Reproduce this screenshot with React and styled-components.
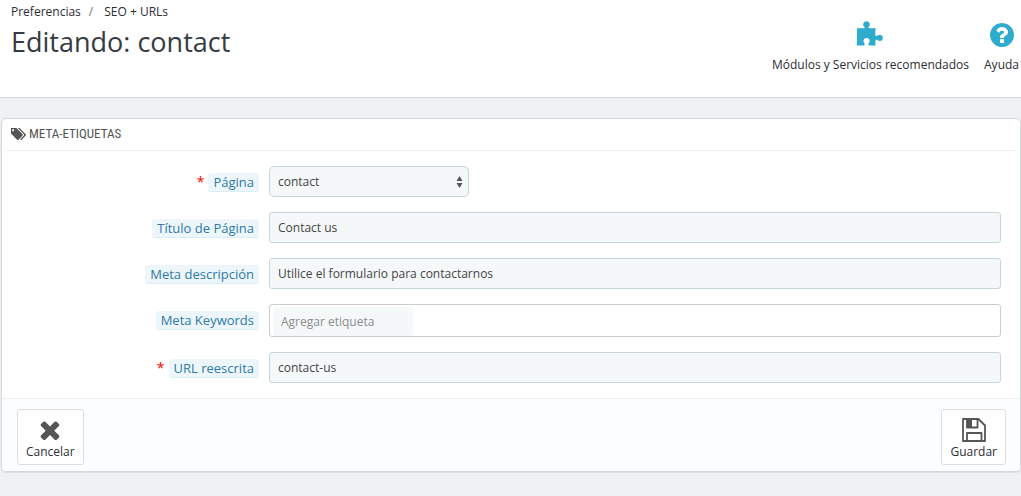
import styled, { createGlobalStyle } from "styled-components"

const GlobalStyle = createGlobalStyle`
    * {
        box-sizing: border-box;
    }
    body {
        margin: 0;
        min-height: 100vh;
        background-color: #eff1f2;
        color: #363a41;
        font-family: "Open Sans", "Noto Sans", sans-serif;
        font-size: 12px;
        line-height: 18px;
    }
    button, input, select {
        font-family: inherit;
        font-size: inherit;
        line-height: inherit;
    }
`
const Header = styled.header`
    display: flex;
    justify-content: space-between;
    height: 98px;
    padding: 3px 2px 0 11px;
    background-color: white;
    border-bottom: solid 1px #d6dade;
`
const Breadcrumb = styled.nav`
    display: flex;
`
const Crumb = styled.a`
    color: #2b2e33;
    text-decoration: none;
`
const Slash = styled.span`
    padding: 0 11px 0 8px;
    color: #5f7d5c;
`
const Title = styled.h1`
    margin: 0;
    font-size: 27px;
    font-weight: 400;
    line-height: 42px;
`
const Toolbar = styled.div`
    display: flex;
    gap: 15px;
    padding-top: 17px;
`
const Tool = styled.a`
    display: flex;
    flex-direction: column;
    align-items: center;
    gap: 6px;
    color: #2b2e33;
    text-decoration: none;
`
const Panel = styled.form`
    margin: 20px 0 0 1px;
    background-color: white;
    border: solid 1px #d3d8db;
    border-radius: 5px;
    box-shadow: 0 1px 1px rgba(0, 0, 0, 0.08);
    overflow: hidden;
`
const PanelHeading = styled.h2`
    display: flex;
    align-items: center;
    gap: 3px;
    height: 32px;
    margin: 0 4px;
    padding: 0 5px 1px;
    border-bottom: solid 1px #eeeeee;
    color: #555555;
    font-family: "Ubuntu Condensed", "Roboto Condensed", "Open Sans Condensed", Roboto, sans-serif;
    font-size: 13px;
    font-weight: 400;
    text-transform: uppercase;
`
const Fields = styled.div`
    display: flex;
    flex-direction: column;
    gap: 15px;
    padding: 15px 19px 15px 13px;
`
const Row = styled.div`
    display: grid;
    grid-template-columns: 1fr 3fr;
    column-gap: 10px;
    align-items: start;
`
const LabelCell = styled.label`
    display: flex;
    justify-content: flex-end;
    gap: 4px;
    padding-top: 7px;
    font-size: 13px;
`
const Required = styled.span`
    color: #ff0000;
    font-size: 14px;
`
const Hint = styled.span`
    padding: 0 5px;
    background-color: #edf7fb;
    border-bottom: solid 1px #d8edf7;
    border-radius: 3px;
    color: #3079a6;
`
const TextInput = styled.input`
    width: 100%;
    height: 31px;
    padding: 0 8px;
    background-color: #f5f8f9;
    border: solid 1px #c7d6db;
    border-radius: 3px;
    color: #444444;
`
const SelectBox = styled.div`
    display: grid;
    grid-template-columns: 1fr 18px;
    align-items: center;
    width: 200px;
    height: 31px;
    background-color: #f5f8f9;
    border: solid 1px #c7d6db;
    border-radius: 5px;
    color: #555555;

    svg {
        grid-area: 1 / 2;
        justify-self: center;
        pointer-events: none;
    }
`
const Select = styled.select`
    grid-area: 1 / 1 / 2 / 3;
    width: 100%;
    height: 100%;
    padding: 0 8px;
    appearance: none;
    background: none;
    border: none;
    color: #444444;
`
const TagBox = styled.div`
    height: 33px;
    padding: 2px 3px 0;
    border: solid 1px #cccccc;
    border-radius: 3px;
`
const TagInput = styled.input`
    display: block;
    width: 140px;
    height: 29px;
    padding: 0 8px;
    background-color: #f5f8f9;
    border: none;
    border-radius: 3px;

    &::placeholder {
        color: #8c8c8c;
        opacity: 1;
    }
`
const PanelFooter = styled.div`
    display: flex;
    justify-content: space-between;
    padding: 10px 14px 6px 15px;
    background-color: #fcfdfe;
    border-top: solid 1px #eeeeee;
`
const Button = styled.button`
    display: flex;
    flex-direction: column;
    align-items: center;
    gap: 1px;
    padding: 8px 8px 3px;
    background-color: white;
    border: solid 1px #dddddd;
    border-radius: 3px;
    color: #2b2e33;
    cursor: pointer;

    svg {
        color: #555555;
    }
`

function PuzzleIcon() {
  return (
    <svg width="28" height="30" viewBox="-1 0 28 30" fill="#2eacce">
      <path d="M0 8.300H7q.8-.2.600-1.100C7.400 6.200 6.200 6 6.200 4.400 6.200 2.600 7.700 1.300 9.500 1.300s3.300 1.300 3.300 3.100c0 1.600-1.100 2-1.300 2.800q-.2.900.8 1.100c2 .2 4-.2 6.300-.4-.3 2-.5 5-.2 7.100q.2 1.200 1.300 1c1-.3 1.600-1.200 3.200-1.200 1.700 0 2.900 1.300 2.900 3.100s-1.200 3.100-2.900 3.100c-1.600 0-2.200-1-3.200-1.200q-1.100-.2-1.300 1c-.2 1.400 0 3 .2 4.600-2 0-4 .3-6.300 0-1.200-.3-.9-.7-.8-1.300.1-1 1.200-1.700 1.200-3.200 0-1.800-1.300-3-3.100-3s-3.100 1.200-3.100 3c0 1.500 1.100 2.200 1.200 3.200.1.600.3 1-.8 1.300-2 .2-4 .1-7 .2z" />
    </svg>
  )
}

function HelpIcon() {
  return (
    <svg width="28" height="30" viewBox="0 -64 1792 1920" fill="#2eacce">
      <path d="M1024 1376v-192q0-14-9-23t-23-9h-192q-14 0-23 9t-9 23v192q0 14 9 23t23 9h192q14 0 23-9t9-23zm256-672q0-88-55.500-163t-138.500-116-170-41q-243 0-371 213-15 24 8 42l132 100q7 6 19 6 16 0 25-12 53-68 86-92 34-24 86-24 48 0 85.500 26t37.500 59q0 38-20 61t-68 45q-63 28-115.500 86.500t-52.500 125.500v36q0 14 9 23t23 9h192q14 0 23-9t9-23q0-19 21.500-49.500t54.500-49.500q32-18 49-28.500t46-35 44.500-48 28-60.500 12.500-81zm384 192q0 209-103 385.500t-279.500 279.500-385.500 103-385.500-103-279.500-279.500-103-385.500 103-385.500 279.500-279.500 385.500-103 385.500 103 279.500 279.500 103 385.500z" />
    </svg>
  )
}

function TagsIcon() {
  return (
    <svg width="15" height="12" viewBox="192 192 1835 1451" fill="currentColor">
      <path d="M576 448q0-53-37.500-90.500t-90.500-37.500-90.500 37.500-37.500 90.500 37.500 90.500 90.500 37.500 90.500-37.500 37.500-90.500zm1067 576q0 53-37 90l-491 492q-39 37-91 37-53 0-90-37l-715-716q-38-37-64.500-101t-26.500-117v-416q0-52 38-90t90-38h416q53 0 117 26.500t102 64.500l715 714q37 39 37 91zm384 0q0 53-37 90l-491 492q-39 37-91 37-36 0-59-14t-53-45l470-470q37-37 37-90 0-52-37-91l-715-714q-38-38-102-64.500t-117-26.500h224q53 0 117 26.500t102 64.500l715 714q37 39 37 91z" />
    </svg>
  )
}

function CancelIcon() {
  return (
    <svg width="24" height="24" viewBox="134 150 1525 1525" fill="currentColor">
      <path d="M1490 1322q0 40-28 68l-136 136q-28 28-68 28t-68-28l-294-294-294 294q-28 28-68 28t-68-28l-136-136q-28-28-28-68t28-68l294-294-294-294q-28-28-28-68t28-68l136-136q28-28 68-28t68 28l294 294 294-294q28-28 68-28t68 28l136 136q28 28 28 68t-28 68l-294 294 294 294q28 28 28 68z" />
    </svg>
  )
}

function SaveIcon() {
  return (
    <svg width="24" height="24" viewBox="0 0 24 24" fill="none" stroke="currentColor" strokeWidth="1.800">
      <path d="M1 1h15.500L23 7.500V23H1z" strokeLinejoin="round" />
      <path d="M5 1v8.500h10.500V1M5 23v-8h14.500v8" strokeLinejoin="round" />
      <path d="M4.500 1H10v9H4.500z" fill="currentColor" stroke="none" />
    </svg>
  )
}

function Arrows() {
  return (
    <svg width="7" height="12" viewBox="0 0 7 12" fill="currentColor">
      <path d="M3.500 0 6.500 5h-6zM3.500 12l3-5h-6z" />
    </svg>
  )
}

function Field({id, label, required, children}) {
  return (
    <Row>
      <LabelCell htmlFor={id}>
        {required && <Required>*</Required>}
        <Hint>{label}</Hint>
      </LabelCell>
      {children}
    </Row>
  )
}

function App() {
  return (
    <>
      <GlobalStyle/>
      <Header>
        <div>
          <Breadcrumb>
            <Crumb href="#">Preferencias</Crumb>
            <Slash>/</Slash>
            <Crumb href="#">SEO + URLs</Crumb>
          </Breadcrumb>
          <Title>Editando: contact</Title>
        </div>
        <Toolbar>
          <Tool href="#"><PuzzleIcon/>Módulos y Servicios recomendados</Tool>
          <Tool href="#"><HelpIcon/>Ayuda</Tool>
        </Toolbar>
      </Header>
      <Panel onSubmit={(e) => e.preventDefault()}>
        <PanelHeading><TagsIcon/>Meta-etiquetas</PanelHeading>
        <Fields>
          <Field id="page" label="Página" required>
            <SelectBox>
              <Select id="page">
                <option>contact</option>
              </Select>
              <Arrows/>
            </SelectBox>
          </Field>
          <Field id="title" label="Título de Página">
            <TextInput id="title" defaultValue="Contact us"/>
          </Field>
          <Field id="description" label="Meta descripción">
            <TextInput id="description" defaultValue="Utilice el formulario para contactarnos"/>
          </Field>
          <Field id="keywords" label="Meta Keywords">
            <TagBox>
              <TagInput id="keywords" placeholder="Agregar etiqueta"/>
            </TagBox>
          </Field>
          <Field id="url" label="URL reescrita" required>
            <TextInput id="url" defaultValue="contact-us"/>
          </Field>
        </Fields>
        <PanelFooter>
          <Button type="button"><CancelIcon/>Cancelar</Button>
          <Button type="submit"><SaveIcon/>Guardar</Button>
        </PanelFooter>
      </Panel>
    </>
  )
}

export default App
